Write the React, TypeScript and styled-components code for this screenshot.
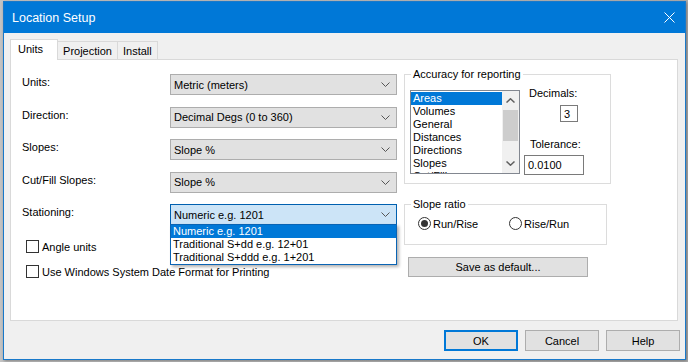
import { Fragment } from 'react'
import styled, { createGlobalStyle } from 'styled-components'

const GlobalStyle = createGlobalStyle`
  html, body {
    margin: 0;
    padding: 0;
    background: #b4b4b4;
  }
  body {
    font-family: "Liberation Sans", Arial, sans-serif;
    font-size: 11px;
    color: #000;
  }
`

const Desktop = styled.div`
  width: 688px;
  height: 362px;
  box-sizing: border-box;
  padding: 1px 2px 0 3px;
  background: linear-gradient(90deg, #c4c4c4, #b0b0b0);
`

const Window = styled.div`
  width: 683px;
  height: 359px;
  box-sizing: border-box;
  border: 1px solid #1979ca;
  background: #f0f0f0;
  display: flex;
  flex-direction: column;
  box-shadow: 1px 1px 3px rgba(0, 0, 0, 0.35);
`

const TitleBar = styled.div`
  height: 31px;
  flex-shrink: 0;
  background: #0078d7;
  color: #fff;
  display: flex;
  align-items: center;
  justify-content: space-between;
  padding: 0 9px 0 8px;
  font-size: 12.5px;
`

const CloseButton = styled.div`
  width: 12px;
  height: 12px;
  display: flex;
`

const Body = styled.div`
  flex: 1;
  display: flex;
  flex-direction: column;
  padding: 6px 7px 0 6px;
`

const TabStrip = styled.div`
  display: flex;
  align-items: flex-end;
  height: 21px;
  position: relative;
  z-index: 1;
  margin-bottom: -1px;
`

const Tab = styled.div<{ active?: boolean }>`
  box-sizing: border-box;
  height: ${({ active }) => (active ? 21 : 19)}px;
  padding: ${({ active }) => (active ? '3px 14px 0 7px' : '3px 5px 0 5px')};
  border: 1px solid #d9d9d9;
  border-bottom: ${({ active }) => (active ? 'none' : '1px solid #d9d9d9')};
  background: ${({ active }) => (active ? '#fff' : '#f0f0f0')};
  margin-left: ${({ active }) => (active ? 0 : -1)}px;
  line-height: 13px;
`

const Panel = styled.div`
  height: 262px;
  box-sizing: border-box;
  border: 1px solid #d9d9d9;
  background: #fff;
  display: grid;
  grid-template-columns: 375px 1fr;
  column-gap: 7px;
  padding: 7px 0 0 11px;
`

const LeftColumn = styled.div`
  padding-top: 7px;
  display: flex;
  flex-direction: column;
`

const FormGrid = styled.div`
  display: grid;
  grid-template-columns: 148px 227px;
  grid-auto-rows: 21px;
  row-gap: 11.5px;
`

const FieldLabel = styled.div`
  line-height: 13px;
  padding-top: 2px;
`

const ComboWrap = styled.div`
  position: relative;
`

const Combo = styled.div<{ focused?: boolean }>`
  box-sizing: border-box;
  height: 21px;
  border: 1px solid ${({ focused }) => (focused ? '#0060b0' : '#adadad')};
  background: ${({ focused }) => (focused ? '#cce4f7' : '#e1e1e1')};
  display: flex;
  align-items: center;
  justify-content: space-between;
  padding: 0 6px 0 3px;
`

const DropList = styled.div`
  position: absolute;
  top: 20px;
  left: 0;
  width: 227px;
  box-sizing: border-box;
  border: 1px solid #0a64b4;
  background: #fff;
  box-shadow: 2px 2px 3px rgba(0, 0, 0, 0.3);
  z-index: 2;
`

const DropItem = styled.div<{ selected?: boolean }>`
  height: 13px;
  line-height: 13px;
  padding-left: 2px;
  background: ${({ selected }) => (selected ? '#0078d7' : '#fff')};
  color: ${({ selected }) => (selected ? '#fff' : '#000')};
`

const Checks = styled.div`
  display: flex;
  flex-direction: column;
  gap: 12px;
  margin-top: 15px;
  padding-left: 4px;
`

const CheckRow = styled.div`
  display: flex;
  align-items: center;
  gap: 3px;
  height: 13px;
`

const CheckBox = styled.div`
  width: 13px;
  height: 13px;
  box-sizing: border-box;
  border: 1px solid #333;
  background: #fff;
`

const RightColumn = styled.div`
  display: flex;
  flex-direction: column;
  align-items: flex-start;
`

const Group = styled.fieldset<{ w: number; h: number }>`
  margin: 0;
  width: ${({ w }) => w}px;
  height: ${({ h }) => h}px;
  box-sizing: border-box;
  border: 1px solid #dcdcdc;
  padding: 0 5px;
`

const Legend = styled.legend`
  line-height: 14px;
  padding: 0 2px;
  margin-left: 1px;
`

const AccuracyBody = styled.div`
  display: flex;
  gap: 4px;
`

const ListBox = styled.div`
  margin-top: 9px;
  width: 110px;
  height: 84px;
  box-sizing: border-box;
  border: 1px solid #828790;
  display: flex;
  overflow: hidden;
`

const ListItems = styled.div`
  flex: 1;
  padding-top: 1px;
`

const ListItem = styled.div<{ selected?: boolean }>`
  height: 13px;
  line-height: 13px;
  padding-left: 2px;
  background: ${({ selected }) => (selected ? '#0078d7' : 'transparent')};
  color: ${({ selected }) => (selected ? '#fff' : '#000')};
  white-space: nowrap;
`

const ScrollBar = styled.div`
  width: 17px;
  background: #f0f0f0;
  display: flex;
  flex-direction: column;
  align-items: center;
  padding: 2px 0;
  box-sizing: border-box;
`

const ScrollArrow = styled.div`
  height: 15px;
  display: flex;
  align-items: center;
  justify-content: center;
`

const ScrollThumb = styled.div`
  margin-top: 2px;
  width: 15px;
  height: 31px;
  background: #cdcdcd;
`

const ScrollTrack = styled.div`
  flex: 1;
`

const SideFields = styled.div`
  display: flex;
  flex-direction: column;
  align-items: flex-start;
`

const SideLabel = styled.div<{ mt: number; ml: number }>`
  margin-top: ${({ mt }) => mt}px;
  margin-left: ${({ ml }) => ml}px;
  line-height: 14px;
`

const TextBox = styled.div<{ w: number; h: number; mt: number; ml: number }>`
  margin-top: ${({ mt }) => mt}px;
  margin-left: ${({ ml }) => ml}px;
  width: ${({ w }) => w}px;
  height: ${({ h }) => h}px;
  box-sizing: border-box;
  border: 1px solid #7a7a7a;
  background: #fff;
  display: flex;
  align-items: center;
  padding-left: 3px;
`

const RadioRow = styled.div`
  display: flex;
  margin-top: 6px;
  padding-left: 8px;
`

const RadioOption = styled.div<{ w?: number }>`
  display: flex;
  align-items: center;
  gap: 2px;
  width: ${({ w }) => (w ? `${w}px` : 'auto')};
`

const RadioCircle = styled.div<{ checked?: boolean }>`
  width: 13px;
  height: 13px;
  box-sizing: border-box;
  border: 1px solid #333;
  border-radius: 50%;
  background: #fff;
  display: flex;
  align-items: center;
  justify-content: center;

  &::after {
    content: '';
    display: ${({ checked }) => (checked ? 'block' : 'none')};
    width: 7px;
    height: 7px;
    border-radius: 50%;
    background: #333;
  }
`

const Button = styled.div<{ w: number; def?: boolean }>`
  width: ${({ w }) => w}px;
  height: 21px;
  box-sizing: border-box;
  border: ${({ def }) => (def ? '2px solid #0078d7' : '1px solid #adadad')};
  background: #e1e1e1;
  display: flex;
  align-items: center;
  justify-content: center;
`

const SaveButton = styled(Button)`
  margin-top: 12px;
  margin-left: 4px;
  height: 20px;
`

const Footer = styled.div`
  display: flex;
  justify-content: flex-end;
  gap: 7px;
  padding-top: 9px;
  margin-right: -2px;
`

const Chevron = () => (
  <svg width="9" height="5" viewBox="0 0 9 5">
    <polyline points="0.5,0.5 4.5,4.5 8.5,0.5" fill="none" stroke="#555" strokeWidth="1" />
  </svg>
)

const ScrollChevron = ({ up }: { up?: boolean }) => (
  <svg width="9" height="5" viewBox="0 0 9 5">
    <polyline
      points={up ? '0.5,4.5 4.5,0.8 8.5,4.5' : '0.5,0.5 4.5,4.2 8.5,0.5'}
      fill="none"
      stroke="#606060"
      strokeWidth="1.5"
    />
  </svg>
)

const fields = [
  { label: 'Units:', value: 'Metric (meters)' },
  { label: 'Direction:', value: 'Decimal Degs (0 to 360)' },
  { label: 'Slopes:', value: 'Slope %' },
  { label: 'Cut/Fill Slopes:', value: 'Slope %' }
]

const stationing = ['Numeric e.g. 1201', 'Traditional S+dd e.g. 12+01', 'Traditional S+ddd e.g. 1+201']

const accuracy = ['Areas', 'Volumes', 'General', 'Distances', 'Directions', 'Slopes', 'Cut/Fill']

export default function App() {
  return (
    <>
      <GlobalStyle />
      <Desktop>
        <Window>
          <TitleBar>
            <span>Location Setup</span>
            <CloseButton>
              <svg width="11" height="11" viewBox="0 0 11 11">
                <path d="M0.5 0.5 L10.5 10.5 M10.5 0.5 L0.5 10.5" stroke="#fff" strokeWidth="1" />
              </svg>
            </CloseButton>
          </TitleBar>
          <Body>
            <TabStrip>
              <Tab active>Units</Tab>
              <Tab>Projection</Tab>
              <Tab>Install</Tab>
            </TabStrip>
            <Panel>
              <LeftColumn>
                <FormGrid>
                  {fields.map(f => (
                    <Fragment key={f.label}>
                      <FieldLabel>{f.label}</FieldLabel>
                      <Combo>
                        <span>{f.value}</span>
                        <Chevron />
                      </Combo>
                    </Fragment>
                  ))}
                  <FieldLabel>Stationing:</FieldLabel>
                  <ComboWrap>
                    <Combo focused>
                      <span>{stationing[0]}</span>
                      <Chevron />
                    </Combo>
                    <DropList>
                      {stationing.map((s, i) => (
                        <DropItem key={s} selected={i === 0}>
                          {s}
                        </DropItem>
                      ))}
                    </DropList>
                  </ComboWrap>
                </FormGrid>
                <Checks>
                  <CheckRow>
                    <CheckBox />
                    <span>Angle units</span>
                  </CheckRow>
                  <CheckRow>
                    <CheckBox />
                    <span>Use Windows System Date Format for Printing</span>
                  </CheckRow>
                </Checks>
              </LeftColumn>

              <RightColumn>
                <Group w={207} h={117}>
                  <Legend>Accuracy for reporting</Legend>
                  <AccuracyBody>
                    <ListBox>
                      <ListItems>
                        {accuracy.map((a, i) => (
                          <ListItem key={a} selected={i === 0}>
                            {a}
                          </ListItem>
                        ))}
                      </ListItems>
                      <ScrollBar>
                        <ScrollArrow>
                          <ScrollChevron up />
                        </ScrollArrow>
                        <ScrollThumb />
                        <ScrollTrack />
                        <ScrollArrow>
                          <ScrollChevron />
                        </ScrollArrow>
                      </ScrollBar>
                    </ListBox>
                    <SideFields>
                      <SideLabel mt={5} ml={5}>
                        Decimals:
                      </SideLabel>
                      <TextBox w={18} h={17} mt={5} ml={36}>
                        3
                      </TextBox>
                      <SideLabel mt={15} ml={6}>
                        Tolerance:
                      </SideLabel>
                      <TextBox w={60} h={20} mt={4} ml={0}>
                        0.0100
                      </TextBox>
                    </SideFields>
                  </AccuracyBody>
                </Group>

                <Group w={203} h={48} style={{ marginTop: 13 }}>
                  <Legend>Slope ratio</Legend>
                  <RadioRow>
                    <RadioOption w={91}>
                      <RadioCircle checked />
                      <span>Run/Rise</span>
                    </RadioOption>
                    <RadioOption>
                      <RadioCircle />
                      <span>Rise/Run</span>
                    </RadioOption>
                  </RadioRow>
                </Group>

                <SaveButton w={180}>Save as default...</SaveButton>
              </RightColumn>
            </Panel>
            <Footer>
              <Button w={74} def>
                OK
              </Button>
              <Button w={74}>Cancel</Button>
              <Button w={74}>Help</Button>
            </Footer>
          </Body>
        </Window>
      </Desktop>
    </>
  )
}
